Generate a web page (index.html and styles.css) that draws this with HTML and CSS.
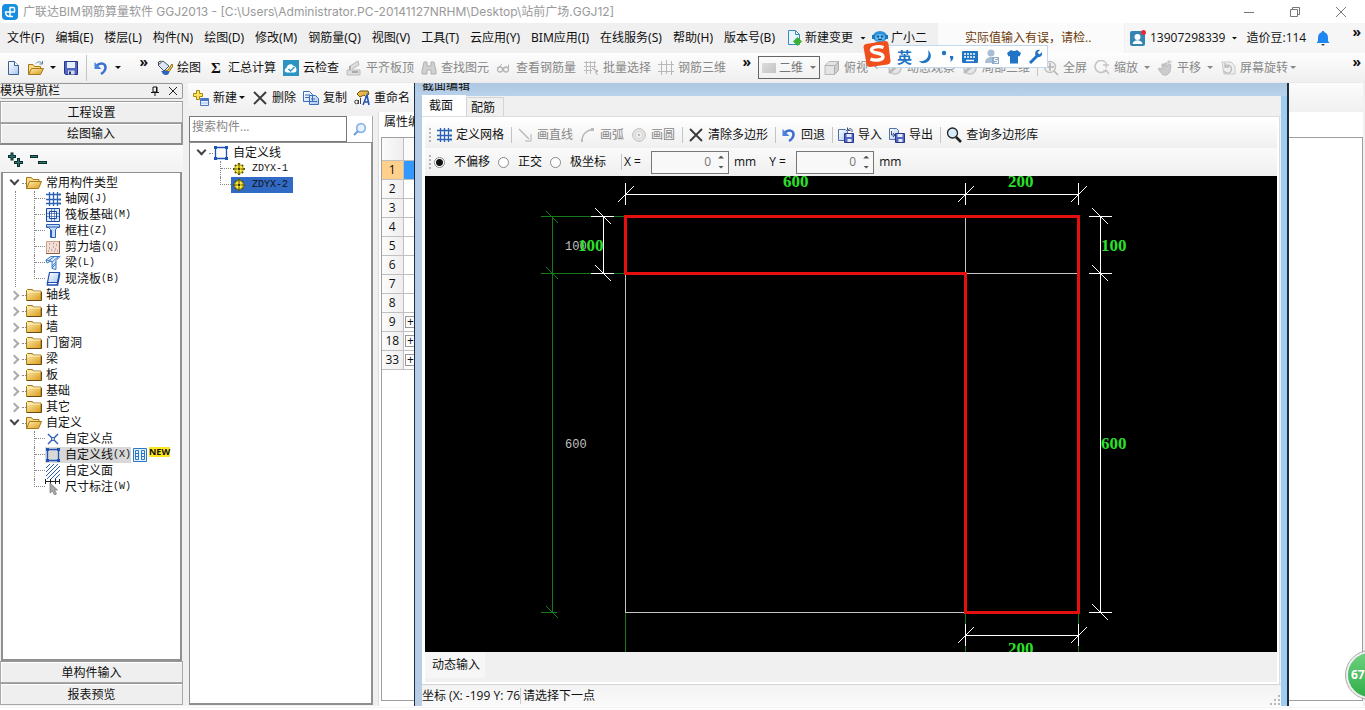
FILE: index.html
```
<!DOCTYPE html>
<html lang="zh-CN">
<head>
<meta charset="utf-8">
<title>广联达BIM钢筋算量软件 GGJ2013</title>
<link rel="stylesheet" href="styles.css">
</head>
<body>
<svg class="sprite" aria-hidden="true">
  <defs>
    <linearGradient id="gold" x1="0" y1="0" x2="1" y2="1"><stop offset="0" stop-color="#fff0b0"/><stop offset="1" stop-color="#d99a1c"/></linearGradient>
    <linearGradient id="paper" x1="0" y1="0" x2="1" y2="1"><stop offset="0" stop-color="#ffffff"/><stop offset="1" stop-color="#a9c8f2"/></linearGradient>
  </defs>
  <symbol id="i-folder" viewBox="0 0 16 16"><path d="M.5 3.500l1-1h5l1 1.500h7.500v9.500H.5z" fill="url(#gold)" stroke="#a87718"/><path d="M1.500 5h13" stroke="#fff6cc"/><path d="M1 13.500h14.500V5" fill="none" stroke="#6b4a10"/></symbol>
  <symbol id="i-open" viewBox="0 0 16 16"><path d="M.5 13.500v-11h5l1.500 2h6v2" fill="#f8dc8a" stroke="#a87718"/><path d="M.5 13.500l3-7h12l-3 7z" fill="url(#gold)" stroke="#a87718"/></symbol>
  <symbol id="i-openarrow" viewBox="0 0 16 16"><path d="M.5 14.500v-10h4.500l1.500 2h6v2" fill="#f8dc8a" stroke="#a87718"/><path d="M.5 14.500l3-6h12l-3 6z" fill="url(#gold)" stroke="#a87718"/><path d="M8 3.500c2-2.500 5-2 6 0M14.500 1v3h-3" fill="none" stroke="#5b7fb0"/></symbol>
  <symbol id="i-grid" viewBox="0 0 16 16"><path d="M1 3.500h13M1 8.500h13M1 12.500h13M4.500 1v14M8.500 1v14M12.500 1v14" stroke="#2c62b4" stroke-width="1.300"/><path d="M14 2.500h2v2h-2zM14 7.500h2v2h-2zM14 11.500h2v2h-2z" fill="#2c62b4"/></symbol>
  <symbol id="i-raft" viewBox="0 0 16 16"><path d="M1.500 1.500h13v13h-13z" fill="#dce9fb" stroke="#1848a0"/><path d="M4.500 4.500h7v7h-7z" fill="#fff" stroke="#1848a0"/><path d="M6.500 2v12M9.500 2v12M2 6.500h12M2 9.500h12" stroke="#1848a0" stroke-width=".6"/></symbol>
  <symbol id="i-column" viewBox="0 0 16 16"><path d="M1.500 1.500h13v3h-2l-2 2v8h-5v-8l-2-2h-2z" fill="#c8dcfa" stroke="#2a5cb8"/><path d="M2 4h12M6.500 7v7" stroke="#2a5cb8"/></symbol>
  <symbol id="i-wall" viewBox="0 0 16 16"><path d="M1.500 2.500h13v12h-13z" fill="#f3ded0" stroke="#c9a48c"/><path d="M14.500 2v12.500H1" fill="none" stroke="#8c6040"/><path d="M4 5h1M8 4.500h1M11 6h1M4 9h1M8 8h1M6 11h1M10 10h1M12 12h1M3 12h1M9 12h1" stroke="#8a70a8"/></symbol>
  <symbol id="i-beam" viewBox="0 0 16 16"><path d="M1 5l5-3.500h9l-4 4v9l-4-1v-7z" fill="#e0eefc" stroke="#3a78c8"/><path d="M3 6l6-4M7 7l6-5M7 11l4-4M7 13l4-4M1 5l1 3 4-2" stroke="#3a78c8" fill="none"/></symbol>
  <symbol id="i-slab" viewBox="0 0 16 16"><path d="M4.500 1.500h10l-2 10h-10z" fill="url(#paper)" stroke="#1d4fae" stroke-width="1.200"/><path d="M2.500 11.500v2.500h10v-2.500M12.500 14l2-10V2" fill="none" stroke="#1d4fae" stroke-width="1.500"/></symbol>
  <symbol id="i-point" viewBox="0 0 16 16"><path d="M3 3l4 4M13 3L9 7M3 13l4-4M13 13L9 9" stroke="#2a5cb8" stroke-width="1.400"/><circle cx="8" cy="8" r="1.500" fill="none" stroke="#2a5cb8"/></symbol>
  <symbol id="i-poly" viewBox="0 0 16 16"><path d="M2.500 2.500h11v11h-11z" fill="none" stroke="#1e52b4" stroke-width="1.300"/><path d="M1 1h3v3H1zM12 1h3v3h-3zM1 12h3v3H1zM12 12h3v3h-3z" fill="#1e52b4"/></symbol>
  <symbol id="i-hatch" viewBox="0 0 16 16"><path d="M1 5l4-4M1 9l8-8M1 13l12-12M2 16L15 3M6 16l9-9M10 16l5-5" stroke="#2a5cb8" stroke-width="1"/></symbol>
  <symbol id="i-dim" viewBox="0 0 16 16"><path d="M.5 0v5M5.500 0v5M10.500 0v5M14.500 0v5M0 2.500h15" stroke="#222"/><path d="M5 4v10l2.500-2 2 4 2-1-2-4h3z" fill="#aaa" stroke="#777" stroke-width=".7"/></symbol>
  <symbol id="i-gear" viewBox="0 0 16 16"><path d="M8 2v12M2 8h12M4 4l8 8M4 12l8-8" stroke="#5c5200" stroke-width="2.200"/><circle cx="8" cy="8" r="4.300" fill="#ffec3c" stroke="#8a7c00" stroke-width=".8"/><path d="M8 4v2M8 10v2M4 8h2M10 8h2" stroke="#5c5200"/><circle cx="8" cy="8" r="1.400" fill="#3a3400"/></symbol>
  <symbol id="i-list" viewBox="0 0 16 16"><path d="M1.500 1.500h13v13h-13z" fill="#e6f2fd" stroke="#2b78c0"/><path d="M3.500 3.500h3v9h-3zM9.500 3.500h3v9h-3zM4 6.500h2M4 9.500h2M10 6.500h2M10 9.500h2" fill="none" stroke="#2b78c0"/></symbol>
  <symbol id="i-new" viewBox="0 0 16 16"><path d="M3.500 1.500h6l4 4v9h-10z" fill="url(#paper)" stroke="#3d5f94"/><path d="M9.500 1.500v4h4" fill="#fff" stroke="#3d5f94"/></symbol>
  <symbol id="i-save" viewBox="0 0 16 16"><path d="M1.500 1.500h13v13h-12l-1-1z" fill="#5068c4" stroke="#28348a"/><path d="M4 2h8v6H4z" fill="#e8f0fc"/><path d="M5 10.500h6.500v4H5z" fill="#d8dce8"/><path d="M6 11.500h2v3H6z" fill="#28348a"/></symbol>
  <symbol id="i-undo" viewBox="0 0 16 16"><path d="M3.500 6C7 2 13 3 12.500 8c-.3 3-2 4.500-4.500 6" fill="none" stroke="#3c6fd0" stroke-width="2.500"/><path d="M1.500 2v7h7z" fill="#4a83de"/></symbol>
  <symbol id="i-brush" viewBox="0 0 16 16"><path d="M1 5l5-4 6 5-5 5z" fill="#dce6f5" stroke="#44556e"/><path d="M1.500 5v-3l3-1" fill="none" stroke="#444"/><path d="M15 4l-4 6-3 1v3l3-1 5-7z" fill="#f6d054" stroke="#8a6a10"/><path d="M4 11c2 2 1 3 4 4 2 .5 5-1 4-4" fill="#2d66c2"/></symbol>
  <symbol id="i-cloud" viewBox="0 0 16 16"><path d="M0 0h16v16H0z" fill="#2b94c2"/><path d="M4 12.500c-3 0-3-4-.5-4.500C4 4 9 3 10.500 6c3-.5 4.500 6 1 6.500z" fill="#fff"/><path d="M5.500 9l2 2 4-4" fill="none" stroke="#2b94c2" stroke-width="1.400"/></symbol>
  <symbol id="i-align" viewBox="0 0 16 16"><path d="M4 6l8-5 1 4-7 4M1 10h13v5H1z" fill="#ddd" stroke="#bbb"/><path d="M4 6v4M6 12h6" stroke="#aaa" stroke-width="2"/></symbol>
  <symbol id="i-binoc" viewBox="0 0 16 16"><path d="M3 2h3v4h4V2h3l2 9v3h-5v-4H6v4H1v-3z" fill="#d0d0d0" stroke="#b0b0b0"/></symbol>
  <symbol id="i-glasses" viewBox="0 0 16 16"><circle cx="4" cy="9.500" r="2.500" fill="none" stroke="#b4b4b4" stroke-width="1.300"/><circle cx="10" cy="9.500" r="2.500" fill="none" stroke="#b4b4b4" stroke-width="1.300"/><path d="M2 8l4-4M12.500 9V4.500" stroke="#b4b4b4" fill="none"/></symbol>
  <symbol id="i-batch" viewBox="0 0 16 16"><path d="M1 2.500h12M1 6.500h12M1 10.500h8M3.500 1v13M7.500 1v13M11.500 1v7" stroke="#bcbcbc"/><path d="M9 8l6 3-2.500 1 2 3" stroke="#aaa" fill="#ddd"/></symbol>
  <symbol id="i-rebar" viewBox="0 0 16 16"><path d="M0 4.500h16M0 11.500h16M3.500 1v14M8.500 0v14M13.500 1v14" stroke="#b8b8b8"/></symbol>
  <symbol id="i-cube" viewBox="0 0 16 16"><path d="M1 5.500l4-4h9.500v9l-4 4H1z" fill="#e4e4e4" stroke="#b8b8b8"/><path d="M10.500 6v8.500l4-4v-9z" fill="#ccc" stroke="#b0b0b0"/><path d="M1 5.500h9.500" stroke="#b0b0b0"/></symbol>
  <symbol id="i-orbit" viewBox="0 0 16 16"><circle cx="8" cy="8" r="6" fill="#e6e6e6" stroke="#c4c4c4" stroke-width="1.500"/><path d="M2 13L13 3" stroke="#bbb" stroke-width="3" fill="none"/></symbol>
  <symbol id="i-full" viewBox="0 0 16 16"><circle cx="7" cy="7" r="5.500" fill="#f0f0f0" stroke="#c0c0c0" stroke-width="1.400"/><path d="M7 3v8M3 7h8M11 11l4 4" stroke="#b4b4b4" stroke-width="1.600"/></symbol>
  <symbol id="i-zoom" viewBox="0 0 16 16"><path d="M11 2a6 6 0 1 0 1 8l3 4" fill="none" stroke="#c4c4c4" stroke-width="1.600"/><path d="M9 5h6M12 2v6M9 11h4" stroke="#c4c4c4" stroke-width="1.300"/></symbol>
  <symbol id="i-hand" viewBox="0 0 16 16"><path d="M1 9l2-1 2 2V4h2v3l1-4h2v4l2-3 2 1-1 7-3 3H6z" fill="#ccc" stroke="#bbb"/><path d="M12 0v4M10 2h5" stroke="#bbb"/></symbol>
  <symbol id="i-rotate" viewBox="0 0 16 16"><path d="M2 2h9l4 4v8H4z" fill="#eee" stroke="#c8c8c8"/><path d="M5 6a4 4 0 1 1-1 5M5 3v4h4" fill="none" stroke="#bbb" stroke-width="1.300"/></symbol>
  <symbol id="i-add" viewBox="0 0 16 16"><path d="M3.500.500h3v3h3v3h-3v3h-3v-3h-3v-3h3z" fill="#ffe45c" stroke="#a88410"/><path d="M7.500 8.500h8v7h-8z" fill="#eaf2ff" stroke="#4877c0"/><path d="M8 10h7" stroke="#4877c0" stroke-width="2"/><path d="M8 13h7" stroke="#a0bce8"/></symbol>
  <symbol id="i-x" viewBox="0 0 16 16"><path d="M2 2l12 12M14 2L2 14" stroke="#3a3a3a" stroke-width="1.900"/></symbol>
  <symbol id="i-copy" viewBox="0 0 16 16"><path d="M.5 1.500h6l3 3v7h-9zM6.500 5.500h6l3 3v6h-9z" fill="url(#paper)" stroke="#3e6cb8"/><path d="M2 5h5M2 7.500h4M8 9h4M8 11.500h6" stroke="#3e6cb8"/></symbol>
  <symbol id="i-rename" viewBox="0 0 16 16"><path d="M3 4l3-3h8l1 3-3 3-2-2-4 2z" fill="#e8b848" stroke="#6b5210"/><circle cx="2.500" cy="12" r="1.800" fill="none" stroke="#444"/><path d="M4.500 10v4M6.500 8v6" stroke="#444"/><path d="M9 15l4-10 2 10M10 12h5" stroke="#2856b8" stroke-width="1.600" fill="none"/></symbol>
  <symbol id="i-mag" viewBox="0 0 16 16"><circle cx="9" cy="7" r="4.300" fill="#e6f2ff" stroke="#88b4e4" stroke-width="1.700"/><path d="M6 10l-4 4" stroke="#6a9cd8" stroke-width="2"/></symbol>
  <symbol id="i-search" viewBox="0 0 16 16"><circle cx="6.500" cy="6" r="5" fill="#d4ecfc" stroke="#222" stroke-width="1.300"/><path d="M10 10l5 5" stroke="#222" stroke-width="2.600"/></symbol>
  <symbol id="i-line" viewBox="0 0 16 16"><path d="M2 2l10 10" stroke="#b4b4b4" stroke-width="1.200"/><path d="M14 7v7H8" stroke="#b4b4b4" fill="none"/></symbol>
  <symbol id="i-arc" viewBox="0 0 16 16"><path d="M2 14C2 7 7 3 13 2.500" fill="none" stroke="#b4b4b4" stroke-width="1.300"/><path d="M11 1h3v3h-3zM1 12h2v3H1z" fill="#bbb"/></symbol>
  <symbol id="i-circle" viewBox="0 0 16 16"><circle cx="8" cy="8" r="6.300" fill="#ececec" stroke="#b8b8b8"/><circle cx="8" cy="8" r="4" fill="none" stroke="#d4d4d4"/><circle cx="8" cy="8" r="1" fill="#aaa"/></symbol>
  <symbol id="i-import" viewBox="0 0 16 16"><path d="M.5 2.500h7l2 2v9h-9z" fill="url(#paper)" stroke="#5272a8"/><path d="M6.500 6.500h9v9h-9z" fill="#5068c4" stroke="#28348a"/><path d="M8.500 7h5v3h-5zM9.500 12h4v3h-4z" fill="#e4eafa"/><path d="M14 5c1-4-3-4-4-2M9.500.500v3h3" fill="none" stroke="#3c4c78"/></symbol>
  <symbol id="i-export" viewBox="0 0 16 16"><path d="M.5 1.500h7l2 2v9h-9z" fill="url(#paper)" stroke="#5272a8"/><path d="M6.500 6.500h9v9h-9z" fill="#5068c4" stroke="#28348a"/><path d="M8.500 7h5v3h-5zM9.500 12h4v3h-4z" fill="#e4eafa"/><path d="M2.500 4v4h2.500M4 6l2 2-2 2" fill="none" stroke="#3c4c78"/></symbol>
  <symbol id="i-doc" viewBox="0 0 16 16"><path d="M2.500.500h7l4 4v10h-11z" fill="#eaf6ff" stroke="#3a88c0"/><path d="M9.500.500v4h4" fill="none" stroke="#3a88c0"/><path d="M11.500 7l4.500 4.500-4.500 4.500L7 11.500z" fill="#3cb030"/></symbol>
  <symbol id="i-robot" viewBox="0 0 16 16"><ellipse cx="8" cy="6.500" rx="7" ry="5.500" fill="#2f93dc"/><path d="M0 5h3v4H0zM13 5h3v4h-3z" fill="#1c78c0"/><path d="M3 12h10l-2 3.500H5z" fill="#2f93dc"/><ellipse cx="8" cy="7.500" rx="5" ry="3.500" fill="#5cb6f0"/><circle cx="6" cy="6.500" r="1" fill="#0c3c64"/><circle cx="10" cy="6.500" r="1" fill="#0c3c64"/><path d="M6 9q2 1.500 4 0" stroke="#0c3c64" fill="none"/></symbol>
  <symbol id="i-user" viewBox="0 0 16 16"><rect x="0" y="1" width="15" height="15" rx="2" fill="#3484b4"/><circle cx="7.500" cy="7" r="3" fill="#fff"/><path d="M2.500 14c1-5 9-5 10 0z" fill="#fff"/><circle cx="13.500" cy="2.500" r="2.500" fill="#e8283c"/></symbol>
  <symbol id="i-bell" viewBox="0 0 16 16"><path d="M7 1h2v1c3 1 4 3 4 6v3l1.500 2h-13L3 11V8c0-3 1-5 4-6z" fill="#1e86f0"/><path d="M6 14h4l-2 2z" fill="#444"/></symbol>
  <symbol id="i-logo" viewBox="0 0 16 16"><rect width="16" height="16" rx="4" fill="#168fe0"/><path d="M3 8h10M8 3v10M8 3.500h3.500q1 0 1 1V8M3.500 8c0 3 1.500 4.500 4.500 4.500h3" fill="none" stroke="#fff" stroke-width="1.500"/></symbol>
</svg>

<header class="titlebar">
  <svg class="icon"><use href="#i-logo"/></svg>
  <h1 class="title">广联达BIM钢筋算量软件 GGJ2013 - [C:\Users\Administrator.PC-20141127NRHM\Desktop\站前广场.GGJ12]</h1>
  <div class="winbtns">
    <button aria-label="最小化"><svg width="12" height="12"><path d="M1 6.500h10" stroke="#777"/></svg></button>
    <button aria-label="还原"><svg width="12" height="12"><path d="M1.500 3.500h7v7h-7zM3.500 3v-1.500h7v7H9" fill="none" stroke="#777"/></svg></button>
    <button aria-label="关闭"><svg width="12" height="12"><path d="M1 1l10 10M11 1L1 11" stroke="#777"/></svg></button>
  </div>
</header>

<div class="menubar">
  <nav class="menus">
    <button>文件(F)</button><button>编辑(E)</button><button>楼层(L)</button><button>构件(N)</button><button>绘图(D)</button><button>修改(M)</button><button>钢筋量(Q)</button><button>视图(V)</button><button>工具(T)</button><button>云应用(Y)</button><button>BIM应用(I)</button><button>在线服务(S)</button><button>帮助(H)</button><button>版本号(B)</button>
    <button class="tool tight"><svg class="icon"><use href="#i-doc"/></svg>新建变更<i class="caret"></i></button>
    <button class="tool tight assistant"><svg class="icon"><use href="#i-robot"/></svg>广小二</button>
  </nav>
  <div class="notice">实际值输入有误，请检..</div>
  <div class="account">
    <button class="tool"><svg class="icon"><use href="#i-user"/></svg>13907298339<i class="caret wide"></i></button>
    <button>造价豆:114</button>
    <button aria-label="消息"><svg class="icon"><use href="#i-bell"/></svg></button>
    <button class="more">»</button>
  </div>
</div>

<div class="toolbar">
  <div class="filetools">
    <button aria-label="新建"><svg class="icon"><use href="#i-new"/></svg></button>
    <button class="tool" aria-label="打开"><svg class="icon"><use href="#i-openarrow"/></svg><i class="caret wide"></i></button>
    <button aria-label="保存"><svg class="icon"><use href="#i-save"/></svg></button>
    <i class="sep"></i>
    <button class="tool" aria-label="撤销"><svg class="icon"><use href="#i-undo"/></svg><i class="caret wide"></i></button>
    <button class="more">»</button>
  </div>
  <div class="group maintools">
    <button class="tool"><svg class="icon"><use href="#i-brush"/></svg>绘图</button>
    <button class="tool"><b class="icon sigma">Σ</b>汇总计算</button>
    <button class="tool"><svg class="icon"><use href="#i-cloud"/></svg>云检查</button>
    <button class="tool" disabled><svg class="icon"><use href="#i-align"/></svg>平齐板顶</button>
    <button class="tool" disabled><svg class="icon"><use href="#i-binoc"/></svg>查找图元</button>
    <button class="tool" disabled><svg class="icon"><use href="#i-glasses"/></svg>查看钢筋量</button>
    <button class="tool" disabled><svg class="icon"><use href="#i-batch"/></svg>批量选择</button>
    <button class="tool" disabled><svg class="icon"><use href="#i-rebar"/></svg>钢筋三维</button>
    <button class="more">»</button>
  </div>
  <div class="group viewtools">
    <div class="dimension"><i class="plane"></i><select aria-label="视图维度" disabled><option>二维</option></select><i class="caret"></i></div>
    <button class="tool" disabled><svg class="icon"><use href="#i-cube"/></svg>俯视<i class="caret wide"></i></button>
    <button class="tool" disabled><svg class="icon"><use href="#i-orbit"/></svg>动态观察</button>
    <button class="tool" disabled><svg class="icon"><use href="#i-orbit"/></svg>局部三维</button>
    <i class="sep"></i>
    <button class="tool" disabled><svg class="icon"><use href="#i-full"/></svg>全屏</button>
    <button class="tool" disabled><svg class="icon"><use href="#i-zoom"/></svg>缩放<i class="caret wide"></i></button>
    <button class="tool" disabled><svg class="icon"><use href="#i-hand"/></svg>平移<i class="caret wide"></i></button>
    <button class="tool" disabled><svg class="icon"><use href="#i-rotate"/></svg>屏幕旋转<i class="caret"></i></button>
  </div>
  <button class="more last">»</button>
</div>

<main class="workspace">
  <aside class="nav">
    <div class="navhead"><span>模块导航栏</span>
      <button aria-label="固定"><svg width="10" height="10"><path d="M3 1h4v5H3zM1 6.500h8M5 7v3M6.500 1v5" fill="none" stroke="#111"/></svg></button>
      <button aria-label="关闭"><svg width="10" height="10"><path d="M1 1l8 8M9 1L1 9" stroke="#222"/></svg></button>
    </div>
    <button class="section">工程设置</button>
    <button class="section active">绘图输入</button>
    <div class="expanders">
      <button aria-label="全部展开"><svg width="16" height="16"><path d="M1 5.500h8M5 1.500v8M7 11.500h9M11.500 7v9" stroke="#0b2f2c" stroke-width="3"/><path d="M2 5.500h6M5 2.500v6M8 11.500h7M11.500 8v7" stroke="#2e7a72"/></svg></button>
      <button aria-label="全部折叠"><svg width="17" height="16"><path d="M0 5.500h8M8 11.500h9" stroke="#0b2f2c" stroke-width="3"/><path d="M1 5.500h6M9 11.500h7" stroke="#2e7a72"/></svg></button>
    </div>
    <ul class="tree navtree">
      <li><div class="row"><i class="chev open"></i><i class="dots"></i><svg class="icon"><use href="#i-open"/></svg>常用构件类型</div>
        <ul class="kids trunk">
          <li class="row"><svg class="icon"><use href="#i-grid"/></svg>轴网<span class="key">(J)</span></li>
          <li class="row"><svg class="icon"><use href="#i-raft"/></svg>筏板基础<span class="key">(M)</span></li>
          <li class="row"><svg class="icon"><use href="#i-column"/></svg>框柱<span class="key">(Z)</span></li>
          <li class="row"><svg class="icon"><use href="#i-wall"/></svg>剪力墙<span class="key">(Q)</span></li>
          <li class="row"><svg class="icon"><use href="#i-beam"/></svg>梁<span class="key">(L)</span></li>
          <li class="row"><svg class="icon"><use href="#i-slab"/></svg>现浇板<span class="key">(B)</span></li>
        </ul></li>
      <li class="row"><i class="chev"></i><i class="dots"></i><svg class="icon"><use href="#i-folder"/></svg>轴线</li>
      <li class="row"><i class="chev"></i><i class="dots"></i><svg class="icon"><use href="#i-folder"/></svg>柱</li>
      <li class="row"><i class="chev"></i><i class="dots"></i><svg class="icon"><use href="#i-folder"/></svg>墙</li>
      <li class="row"><i class="chev"></i><i class="dots"></i><svg class="icon"><use href="#i-folder"/></svg>门窗洞</li>
      <li class="row"><i class="chev"></i><i class="dots"></i><svg class="icon"><use href="#i-folder"/></svg>梁</li>
      <li class="row"><i class="chev"></i><i class="dots"></i><svg class="icon"><use href="#i-folder"/></svg>板</li>
      <li class="row"><i class="chev"></i><i class="dots"></i><svg class="icon"><use href="#i-folder"/></svg>基础</li>
      <li class="row"><i class="chev"></i><i class="dots"></i><svg class="icon"><use href="#i-folder"/></svg>其它</li>
      <li><div class="row"><i class="chev open"></i><i class="dots"></i><svg class="icon"><use href="#i-open"/></svg>自定义</div>
        <ul class="kids">
          <li class="row"><svg class="icon"><use href="#i-point"/></svg>自定义点</li>
          <li class="row"><span class="current"><svg class="icon"><use href="#i-poly"/></svg>自定义线<span class="key">(X)</span></span><svg class="icon"><use href="#i-list"/></svg><b class="new">NEW</b></li>
          <li class="row"><svg class="icon"><use href="#i-hatch"/></svg>自定义面</li>
          <li class="row"><svg class="icon"><use href="#i-dim"/></svg>尺寸标注<span class="key">(W)</span></li>
        </ul></li>
    </ul>
    <button class="section">单构件输入</button>
    <button class="section">报表预览</button>
  </aside>

  <section class="content">
    <div class="group comptools">
      <button class="tool"><svg class="icon"><use href="#i-add"/></svg>新建<i class="caret"></i></button>
      <button class="tool"><svg class="icon"><use href="#i-x"/></svg>删除</button>
      <button class="tool"><svg class="icon"><use href="#i-copy"/></svg>复制</button>
      <button class="tool"><svg class="icon"><use href="#i-rename"/></svg>重命名</button>
    </div>
    <div class="columns">
      <div class="components">
        <div class="searchbox"><input type="text" placeholder="搜索构件..." aria-label="搜索构件"><button aria-label="搜索"><svg class="icon"><use href="#i-mag"/></svg></button></div>
        <ul class="tree comptree">
          <li><div class="row"><i class="chev open"></i><i class="dots"></i><svg class="icon"><use href="#i-poly"/></svg>自定义线</div>
            <ul class="kids">
              <li class="row"><span class="item"><svg class="icon"><use href="#i-gear"/></svg><span class="key">ZDYX-1</span></span></li>
              <li class="row"><span class="item selected"><svg class="icon"><use href="#i-gear"/></svg><span class="key">ZDYX-2</span></span></li>
            </ul></li>
        </ul>
      </div>
      <div class="props">
        <div class="proptab">属性编辑</div>
        <div class="propbody">
          <table class="grid">
            <thead><tr><th></th><th></th></tr></thead>
            <tbody>
              <tr class="on"><th>1</th><td></td></tr><tr><th>2</th><td></td></tr><tr><th>3</th><td></td></tr><tr><th>4</th><td></td></tr><tr><th>5</th><td></td></tr><tr><th>6</th><td></td></tr><tr><th>7</th><td></td></tr><tr><th>8</th><td></td></tr>
              <tr><th>9</th><td><button class="plus">+</button></td></tr><tr><th>18</th><td><button class="plus">+</button></td></tr><tr><th>33</th><td><button class="plus">+</button></td></tr>
            </tbody>
          </table>
        </div>
      </div>
    </div>
  </section>

  <section class="dialog" aria-label="截面编辑">
    <div class="dlgtitle">截面编辑</div>
    <div class="dlgclient">
      <div class="tabs"><button class="tab active">截面</button><button class="tab">配筋</button></div>
      <div class="page">
        <div class="group drawtools">
          <i class="grip"></i>
          <button class="tool"><svg class="icon"><use href="#i-grid"/></svg>定义网格</button>
          <i class="sep"></i>
          <button class="tool" disabled><svg class="icon"><use href="#i-line"/></svg>画直线</button>
          <button class="tool" disabled><svg class="icon"><use href="#i-arc"/></svg>画弧</button>
          <button class="tool" disabled><svg class="icon"><use href="#i-circle"/></svg>画圆</button>
          <i class="sep"></i>
          <button class="tool"><svg class="icon"><use href="#i-x"/></svg>清除多边形</button>
          <i class="sep"></i>
          <button class="tool"><svg class="icon"><use href="#i-undo"/></svg>回退</button>
          <i class="sep"></i>
          <button class="tool"><svg class="icon"><use href="#i-import"/></svg>导入</button>
          <button class="tool"><svg class="icon"><use href="#i-export"/></svg>导出</button>
          <i class="sep"></i>
          <button class="tool"><svg class="icon"><use href="#i-search"/></svg>查询多边形库</button>
        </div>
        <div class="offsets">
          <i class="grip"></i>
          <div class="modes">
            <label><input type="radio" name="mode" checked>不偏移</label>
            <label><input type="radio" name="mode">正交</label>
            <label><input type="radio" name="mode">极坐标</label>
          </div>
          <i class="sep"></i>
          <div class="field"><label for="dx">X =</label><span class="spin"><input id="dx" type="text" value="0"><span class="arrows"><button class="up" aria-label="增加"></button><button class="down" aria-label="减少"></button></span></span>mm</div>
          <div class="field"><label for="dy">Y =</label><span class="spin"><input id="dy" type="text" value="0"><span class="arrows"><button class="up" aria-label="增加"></button><button class="down" aria-label="减少"></button></span></span>mm</div>
        </div>
        <svg class="canvas" role="img" aria-label="截面图形">
          <g transform="translate(-425 -176)" fill="none" shape-rendering="crispEdges">
            <path class="axis" d="M552.500 216.500v396M541 216.500h84M541 273.500h84M541 612.500h16M625.500 612v40M965.500 612v40M1078.500 612v40"/>
            <path class="axis" d="M546 211l12 12M546 267l12 12M546 606l12 12"/>
            <path class="thin" d="M625.500 275v337.500H965M965.500 217v56.500H1078"/>
            <path class="outline" d="M625.500 216.500h453v396h-113v-339h-340z"/>
            <path class="dimline" d="M625.500 194.500h453M625.500 183v22M965.500 183v22M1078.500 183v22M603.500 216.500v57M591 216.500h23M591 273.500h23M1100.500 216.500v396M1089 216.500h23M1089 273.500h23M1089 612.500h23M965.500 635.500h113M965.500 624v22M1078.500 624v22"/>
            <path class="dimline" d="M618 202l16-16M958 202l16-16M1071 202l16-16M595 208l16 16M595 265l16 16M1092 208l16 16M1092 265l16 16M1092 604l16 16M958 643l16-16M1071 643l16-16"/>
          </g>
          <g transform="translate(-425 -176)">
            <text class="axistext" x="565" y="250">100</text><text class="axistext" x="565" y="448">600</text>
            <text class="dimtext" x="783" y="187">600</text><text class="dimtext" x="1008" y="187">200</text>
            <text class="dimtext" x="578" y="251">100</text><text class="dimtext" x="1101" y="251">100</text>
            <text class="dimtext" x="1101" y="449">600</text><text class="dimtext" x="1008" y="654">200</text>
          </g>
        </svg>
        <div class="dynrow"><button class="dyn">动态输入</button></div>
      </div>
      <div class="status"><span class="coords">坐标 (X: -199 Y: 76</span><span class="hint">请选择下一点</span>
        <svg class="sizer" width="11" height="11"><path d="M8 0h2v2H8zM4 4h2v2H4zM8 4h2v2H8zM0 8h2v2H0zM4 8h2v2H4zM8 8h2v2H8z" fill="#b8b8b8"/></svg></div>
    </div>
  </section>
</main>
<footer class="bottom"></footer>

<div class="ime">
  <svg class="imelogo" viewBox="0 0 28 28"><path d="M3 4l19-3q3 0 3.500 3l2 17q0 3-3 3.500L7 27q-3 0-3.500-3L.5 7Q.5 4.500 3 4z" fill="#f0501e"/><path d="M20.500 7.500c-4-1.500-12-1-12 2.500 0 4 11.500 2 11.500 6.500 0 4-8 4.500-12.500 2.500" fill="none" stroke="#fff" stroke-width="3.400"/></svg>
  <b>英</b>
  <svg width="16" height="16"><path d="M10 1c5 4 3 12-3 13-3 .5-5-.5-6-2 7 1 11-4 9-11z" fill="#1f74c4"/></svg>
  <svg width="16" height="16"><circle cx="4" cy="4" r="2.200" fill="#1f74c4"/><path d="M10 7h3c1 3-1 5-3 6 1-2 1-3 0-4z" fill="#1f74c4"/></svg>
  <svg width="16" height="16"><rect y="2" width="16" height="12" rx="1" fill="#1f74c4"/><path d="M2 5h12M2 8h12" stroke="#fff" stroke-width="1.500" stroke-dasharray="2 1"/><path d="M4 11.500h8" stroke="#fff" stroke-width="1.500"/></svg>
  <svg width="16" height="16"><circle cx="7" cy="4" r="3.500" fill="#a9bdd6"/><path d="M1 14c0-8 12-8 12 0z" fill="#a9bdd6"/><path d="M8 8h7v7H8z" fill="#8fa9c8"/><path d="M13.500 9.500h-3v2h3v2h-3" fill="none" stroke="#fff"/></svg>
  <svg width="16" height="16"><path d="M5 1q3 2 6 0l4 3-1.500 3.500L12 7v7.500H4V7l-1.500.500L1 4z" fill="#1f74c4"/></svg>
  <svg width="16" height="16"><path d="M2 14l7-7" stroke="#1f74c4" stroke-width="3"/><path d="M14 3l-2.500 2.500-2-2L12 1C8 0 6 4 8 7c3 3 7 0 6-4z" fill="#1f74c4"/></svg>
</div>
<button class="ball">67</button>
</body>
</html>
```

FILE: styles.css
```
*, ::before { box-sizing: border-box; }
body {
  margin: 0;
  height: 100vh;
  overflow: hidden;
  display: flex;
  flex-direction: column;
  position: relative;
  background: #f0f0f0;
  color: #111;
  font: 12px/16px "Open Sans", "Noto Sans CJK SC", sans-serif;
}
button, input, select { font: inherit; color: inherit; }
button { border: 0; padding: 0; background: none; white-space: nowrap; }
button:disabled { color: #888; }
ul { list-style: none; margin: 0; padding: 0; }
.sprite { position: absolute; width: 0; height: 0; }
.icon { width: 16px; height: 16px; flex: none; display: block; }

/* Shared toolbar parts */
.group { display: flex; align-items: center; gap: 7px; }
.tool { display: flex; align-items: center; gap: 4px; }
.caret {
  flex: none;
  width: 6px;
  height: 3px;
  margin-left: -2px;
  background: currentColor;
  clip-path: polygon(0 0, 100% 0, 50% 100%);
}
.caret.wide { margin-left: 2px; }
.sep { flex: none; width: 1px; height: 16px; margin-right: -2px; background: #c4c4c4; }
.more { font: bold 14px/10px "Open Sans", sans-serif; }
.grip { flex: none; width: 2px; height: 14px; background: repeating-linear-gradient(#b4b4b4 0 2px, transparent 2px 4px); }

/* Title bar */
.titlebar { flex: none; height: 23px; display: flex; align-items: center; gap: 5px; padding-left: 2px; background: #fff; }
.title { flex: 1; margin: 0; color: #999; font: 400 12px/16px Inter, "Noto Sans CJK SC", sans-serif; white-space: nowrap; }
.winbtns { display: flex; gap: 34px; padding-right: 18px; }
.winbtns svg { display: block; }

/* Menu bar */
.menubar { flex: none; height: 30px; display: flex; background: #fbfbfb; }
.menus { flex: none; width: 938px; display: flex; align-items: center; gap: 11px; padding-left: 7px; background: #f0f0f0; overflow: hidden; font-family: "Noto Sans", "Noto Sans CJK SC", sans-serif; }
.tight { gap: 3px; }
.assistant { margin-left: -5px; }
.tight .caret { margin-left: 4px; }
.notice { flex: none; width: 187px; padding: 7px 0 0 27px; color: #6b3a08; border-right: 1px solid #f0f0f0; white-space: nowrap; }
.account { flex: 1; display: flex; align-items: center; gap: 9px; padding-left: 5px; background: #f6f6f6; }
.account .more { margin: 0 4px 12px auto; }

/* Main toolbar */
.toolbar { flex: none; height: 30px; display: flex; align-items: center; background: linear-gradient(#fdfdfd, #efefef); border-bottom: 1px solid #eaeaea; }
.filetools { flex: none; width: 157px; display: flex; align-items: center; gap: 7px; padding-left: 5px; }
.filetools .sep { height: 26px; margin-right: -1px; }
.filetools .more { margin: 0 9px 12px auto; }
.maintools { flex: none; width: 601px; }
.maintools .more { margin: 0 7px 12px auto; }
.sigma { font: bold 15px/16px "Liberation Serif", serif; text-align: center; }
.viewtools { flex: none; }
.dimension { display: flex; align-items: center; width: 62px; height: 23px; padding: 0 3px; margin-right: -3px; border: 1px solid #666; color: #777; }
.dimension select { flex: 1; min-width: 0; margin-left: 3px; border: 0; padding: 0; appearance: none; background: none; color: #777; opacity: 1; }
.plane { width: 14px; height: 10px; background: linear-gradient(135deg, #ddd, #c4c4c4); }
.last { margin: 0 4px 12px auto; }

/* Workspace */
.workspace { flex: 1; min-height: 0; display: flex; gap: 5px; position: relative; }
.bottom { flex: none; height: 4px; background: #f4f4f4; border-top: 1px solid #fff; border-bottom: 2px solid #fff; }

.nav { flex: none; width: 183px; display: flex; flex-direction: column; padding-bottom: 1px; }
.navhead { flex: none; display: flex; align-items: center; gap: 8px; height: 16px; margin-bottom: 2px; padding-right: 4px; border: 1px solid #999; border-left: 0; border-radius: 2px; line-height: 14px; }
.navhead span { flex: 1; }
.navhead svg { display: block; }
.section { flex: none; height: 22px; padding-top: 1px; background: #efefef; border: 1px solid #a8a8a8; border-top-color: #999; box-shadow: inset 1px 1px #fff; }
.section.active { border-bottom: 2px solid #888; border-right: 2px solid #999; }
.expanders { flex: none; display: flex; align-items: center; gap: 7px; height: 27px; padding-left: 7px; background: linear-gradient(#fafafa, #f2f2f2); }
.expanders svg { display: block; }

/* Trees */
.tree { background: #fff; border: 2px solid #909090; border-top-width: 1px; flex: 1; min-height: 0; overflow: hidden; }
.navtree { padding: 2px 0 0 5px; margin: 0 1px; }
.row { display: flex; align-items: center; height: 16px; white-space: nowrap; }
.row > .icon { margin-right: 4px; }
.chev { flex: none; width: 12px; height: 12px; display: grid; place-items: center; }
.chev::before { content: ""; width: 7px; height: 7px; border: solid #aaa; border-width: 2px 2px 0 0; rotate: 45deg; }
.chev.open { height: 16px; align-items: start; padding-top: 2px; }
.chev.open::before { border-color: #444; rotate: 135deg; }
.dots { flex: none; width: 4px; margin-left: 2px; border-top: 1px dotted #888; }
.kids { margin-left: 26px; }
.kids > .row::before { content: ""; flex: none; align-self: flex-start; width: 11px; height: 8px; border-left: 1px dotted #888; border-bottom: 1px dotted #888; }
.kids > .row:not(:last-child) { border-left: 1px dotted #888; }
.kids > .row:not(:last-child)::before { width: 10px; border-left: 0; }
.trunk { margin-left: 7px; padding-left: 18px; border-left: 1px dotted #888; }
.key { font: 10px/16px "Liberation Mono", monospace; }
.current { display: flex; align-items: center; gap: 4px; background: #d8d8d8; }
.current .key { margin-left: -4px; }
.current + .icon { margin: 0 1px; }
.new { align-self: flex-start; font: bold 9px/10px "Open Sans", sans-serif; background: #ffe420; }

/* Components and properties */
.content { flex: 1; min-width: 0; display: flex; flex-direction: column; padding-right: 2px; }
.comptools { flex: none; height: 29px; padding-left: 5px; background: linear-gradient(#fcfcfc, #f0f0f0); }
.columns { flex: 1; min-height: 0; display: flex; gap: 5px; }
.components { flex: none; width: 185px; display: flex; flex-direction: column; padding: 4px 0 1px 1px; }
.searchbox { flex: none; display: flex; height: 26px; background: #fff; border-right: 1px solid #aaa; }
.searchbox input { width: 158px; padding: 0 2px 4px; border: 1px solid #777; outline: 0; background: #fff; }
.searchbox input::placeholder { color: #888; opacity: 1; }
.searchbox button { flex: 1; display: grid; place-items: center; }
.comptree { padding: 2px 0 0 5px; border-width: 1px 2px 2px 1px; }
.comptree .kids { margin-left: 25px; }
.item { display: flex; gap: 5px; height: 16px; align-items: center; padding: 0 5px 0 0; }
.selected { background: #316ac5; }
.props { flex: 1; min-width: 0; display: flex; flex-direction: column; padding: 0 0 5px 2px; border-left: 1px solid #ddd; background: #fff; }
.proptab { flex: none; height: 25px; padding: 2px 0 0 3px; }
.propbody { flex: 1; min-height: 0; border: 1px solid #a0a0a0; }
.grid { width: 300px; border-collapse: collapse; table-layout: fixed; }
.grid th, .grid td { height: 19px; padding: 0; border: 1px solid #c0c0c0; line-height: 16px; }
.grid th { font-weight: 400; background: linear-gradient(90deg, #fbfbfb, #eee); }
.grid thead th { height: 22px; border-top: 0; }
.grid th:first-child { width: 21px; border-left: 0; }
.grid .on th { background: #ffcf8c; }
.grid .on td { background: #3399ff; }
.plus { display: block; width: 12px; height: 12px; margin-left: 1px; border: 1px solid #999; line-height: 9px; }

/* Section editor window */
.dialog { position: absolute; left: 414px; right: 76px; top: 0; bottom: 0; display: flex; flex-direction: column; padding: 0 6px 0 7px; background: linear-gradient(90deg, #b7cde6 50%, #9fcdef); border: solid #1b2c40; border-width: 0 2px 0 1px; }
.dlgtitle { flex: none; display: flex; align-items: flex-end; height: 13px; padding-bottom: 3px; margin: 0 -6px 0 -7px; padding-left: 7px; overflow: hidden; background: linear-gradient(#aec8e2, #b9d1ea); line-height: 14px; }
.dlgclient { flex: 1; min-height: 0; display: flex; flex-direction: column; background: #f0f0f0; }
.tabs { flex: none; display: flex; align-items: flex-end; height: 21px; border-bottom: 1px solid #ddd; }
.tab { width: 38px; height: 19px; padding: 1px 4px 0 0; border: 1px solid #d4d4d4; border-bottom: 0; }
.tab.active { width: 44px; height: 21px; background: #fff; border: 0; padding-right: 6px; }
.page { flex: 1; min-height: 0; display: flex; flex-direction: column; padding: 4px 2px 0 3px; margin-right: 1px; background: #fff; border-right: 1px solid #ddd; }
.drawtools { flex: none; height: 27px; padding-left: 4px; background: linear-gradient(#fdfdfd, #f0f0f0); }
.drawtools .grip { margin-right: -2px; }
.offsets { flex: none; display: flex; align-items: center; height: 28px; padding-left: 4px; background: linear-gradient(#fafafa, #efefef); }
.modes { display: flex; gap: 8px; width: 190px; padding-left: 3px; }
.modes label { display: flex; align-items: center; gap: 9px; }
.modes input { flex: none; width: 11px; height: 11px; margin: 0; appearance: none; border: 1px solid #888; border-radius: 50%; background: #fff; }
.modes input:checked { background: radial-gradient(#111 0 3px, #fff 4px); }
.field { display: flex; align-items: center; gap: 5px; padding: 0 9px 0 4px; white-space: nowrap; }
.field label { min-width: 22px; }
.spin { display: flex; width: 78px; height: 23px; border: 1px solid #777; background: #f8f8f8; }
.spin input { flex: 1; min-width: 0; border: 0; padding: 0 2px; outline: 0; background: none; text-align: right; color: #777; }
.arrows { display: flex; flex-direction: column; justify-content: space-between; width: 15px; padding: 4px 4px 4px 5px; }
.arrows button { width: 6px; height: 3px; background: #555; clip-path: polygon(0 0, 100% 0, 50% 100%); }
.arrows .up { clip-path: polygon(50% 0, 100% 100%, 0 100%); }
.canvas { flex: 1; min-height: 0; width: 100%; display: block; background: #000; }
.axis { stroke: #147a1c; }
.thin { stroke: #c4c4c4; }
.outline { stroke: #e60f0f; stroke-width: 3; }
.dimline { stroke: #fff; }
.dimtext { font: bold 17px "Liberation Serif", serif; fill: #2be02b; }
.axistext { font: 12px "Liberation Mono", monospace; fill: #c0c0c0; }
.dynrow { flex: none; height: 30px; margin-bottom: 2px; background: #f0f0f0; }
.dyn { height: 26px; padding: 0 5px 0 7px; background: #f6f6f6; }
.status { flex: none; display: flex; align-items: center; height: 22px; border-top: 1px solid #d4d4d4; background: linear-gradient(#f3f3f3, #fafafa); }
.coords { width: 99px; border-right: 1px solid #ccc; white-space: nowrap; overflow: hidden; }
.hint { flex: 1; padding-left: 2px; }
.sizer { align-self: flex-end; }

/* Floating input-method bar and desktop ball */
.ime { position: absolute; left: 876px; top: 45px; display: flex; align-items: center; gap: 6px; height: 23px; width: 172px; padding-left: 20px; background: #fff; border: 1px solid #c4d8ec; color: #1f74c4; }
.ime b { font-size: 15px; line-height: 18px; }
.ime svg { flex: none; }
.imelogo { position: absolute; left: -14px; top: -6px; width: 28px; height: 28px; }
.ball { position: absolute; right: -29px; top: 651px; width: 48px; height: 48px; padding-left: 3px; border: 2px solid #eee; border-radius: 50%; outline: 1px solid #aaa; background: linear-gradient(#6fd080, #2fae48); color: #fff; text-align: left; font-weight: 700; }
```
